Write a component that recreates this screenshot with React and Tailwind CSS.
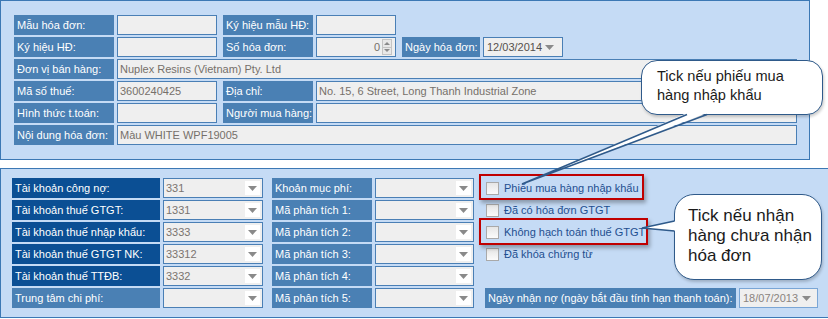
import React from 'react';

const font = "font-['Liberation_Sans',Arial,sans-serif]";

function Label({ children, w, dark }) {
  return (
    <div
      className={`h-[20px] shrink-0 px-[3px] text-[11px] leading-[20px] text-white whitespace-nowrap overflow-hidden ${
        dark ? 'bg-[#0b4f94]' : 'bg-[#4a80b4]'
      } ${w}`}
    >
      {children}
    </div>
  );
}

function Input({ w, value, className = '' }) {
  return (
    <div
      className={`h-[20px] shrink-0 border border-[#4a7fb5] bg-[#efefef] px-[2px] text-[11px] leading-[18px] text-[#76706a] whitespace-nowrap overflow-hidden ${w} ${className}`}
    >
      {value}
    </div>
  );
}

function Arrow() {
  return (
    <svg width="9" height="5" viewBox="0 0 9 5">
      <path d="M0 0 L9 0 L4.5 5 Z" fill="#8a8a8a" />
    </svg>
  );
}

function Select({ w, value }) {
  return (
    <div
      className={`h-[20px] shrink-0 border border-[#4a7fb5] bg-[#efefef] flex items-center text-[11px] text-[#7a7470] ${w}`}
    >
      <span className="flex-1 pl-[2px] leading-[18px]">{value}</span>
      <span className="mr-[2px] w-[15px] h-[14px] bg-white flex items-center justify-center">
        <Arrow />
      </span>
    </div>
  );
}

function Checkbox({ label }) {
  return (
    <div className="h-[20px] flex items-center">
      <span className="ml-[1px] w-[13px] h-[13px] border border-[#a9a9a9] bg-gradient-to-b from-[#e6e6e6] to-[#fbfbfb]" />
      <span className="ml-[5px] text-[11px] text-[#1f4f90] whitespace-nowrap">{label}</span>
    </div>
  );
}

function Row({ children }) {
  return <div className="flex h-[20px] items-stretch">{children}</div>;
}

const bottomRows = [
  { l1: 'Tài khoản công nợ:', v1: '331', dark: true, l2: 'Khoản mục phí:', cb: 'Phiếu mua hàng nhập khẩu' },
  { l1: 'Tài khoản thuế GTGT:', v1: '1331', dark: true, l2: 'Mã phân tích 1:', cb: 'Đã có hóa đơn GTGT' },
  { l1: 'Tài khoản thuế nhập khẩu:', v1: '3333', dark: true, l2: 'Mã phân tích 2:', cb: 'Không hạch toán thuế GTGT' },
  { l1: 'Tài khoản thuế GTGT NK:', v1: '33312', dark: true, l2: 'Mã phân tích 3:', cb: 'Đã khóa chứng từ' },
  { l1: 'Tài khoản thuế TTĐB:', v1: '3332', dark: true, l2: 'Mã phân tích 4:' },
  { l1: 'Trung tâm chi phí:', v1: '', dark: false, l2: 'Mã phân tích 5:', last: true },
];

export default function App() {
  return (
    <div className={`relative w-[828px] h-[319px] bg-white overflow-hidden ${font}`}>
      {/* Invoice header panel */}
      <div className="w-[810px] h-[160px] border border-[#3c78b4] bg-[#c5dbf5] pt-[14px] pl-[13px] flex flex-col gap-[2px]">
        <Row>
          <Label w="w-[100px]">Mẫu hóa đơn:</Label>
          <Input w="w-[100px] ml-[3px]" />
          <Label w="w-[90px] ml-[6px]">Ký hiệu mẫu HĐ:</Label>
          <Input w="w-[80px] ml-[3px]" />
        </Row>
        <Row>
          <Label w="w-[100px]">Ký hiệu HĐ:</Label>
          <Input w="w-[100px] ml-[3px]" />
          <Label w="w-[90px] ml-[6px]">Số hóa đơn:</Label>
          <div className="ml-[3px] w-[80px] h-[20px] border border-[#4a7fb5] bg-[#efefef] flex items-center text-[11px] text-[#76706a]">
            <span className="flex-1 text-right pr-[2px]">0</span>
            <span className="mr-[3px] w-[10px] h-[16px] flex flex-col border border-[#c4c4c4] bg-[#e8e8e8]">
              <span className="flex-1 flex items-center justify-center border-b border-[#c4c4c4]">
                <svg width="6" height="3" viewBox="0 0 6 3"><path d="M0 3 L6 3 L3 0 Z" fill="#8a8a8a" /></svg>
              </span>
              <span className="flex-1 flex items-center justify-center">
                <svg width="6" height="3" viewBox="0 0 6 3"><path d="M0 0 L6 0 L3 3 Z" fill="#8a8a8a" /></svg>
              </span>
            </span>
          </div>
          <Label w="w-[78px] ml-[6px]">Ngày hóa đơn:</Label>
          <div className="ml-[3px] w-[80px] h-[20px] border border-[#4a7fb5] bg-[#efefef] flex items-center text-[11px] text-[#55504c]">
            <span className="flex-1 pl-[3px]">12/03/2014</span>
            <span className="mr-[8px]"><Arrow /></span>
          </div>
        </Row>
        <Row>
          <Label w="w-[100px]">Đơn vị bán hàng:</Label>
          <Input w="w-[680px] ml-[3px]" value="Nuplex Resins (Vietnam) Pty. Ltd" />
        </Row>
        <Row>
          <Label w="w-[100px]">Mã số thuế:</Label>
          <Input w="w-[100px] ml-[3px]" value="3600240425" />
          <Label w="w-[90px] ml-[6px]">Địa chỉ:</Label>
          <Input w="w-[481px] ml-[3px]" value="No. 15, 6 Street, Long Thanh Industrial Zone" />
        </Row>
        <Row>
          <Label w="w-[100px]">Hình thức t.toán:</Label>
          <Input w="w-[100px] ml-[3px]" />
          <Label w="w-[90px] ml-[6px]">Người mua hàng:</Label>
          <Input w="w-[481px] ml-[3px]" />
        </Row>
        <Row>
          <Label w="w-[100px]">Nội dung hóa đơn:</Label>
          <Input w="w-[680px] ml-[3px]" value="Màu WHITE WPF19005" />
        </Row>
      </div>

      {/* Accounts panel */}
      <div className="mt-[8px] w-[830px] h-[150px] border border-[#3c78b4] bg-[#c5dbf5] pt-[9px] pl-[11px] flex flex-col gap-[2px]">
        {bottomRows.map((r, i) => (
          <Row key={i}>
            <Label w="w-[148px]" dark={r.dark}>{r.l1}</Label>
            <Select w="w-[100px] ml-[3px]" value={r.v1} />
            <Label w="w-[100px] ml-[9px]">{r.l2}</Label>
            <Select w="w-[99px] ml-[3px]" value="" />
            <div className="ml-[11px] flex">
              {r.cb && <Checkbox label={r.cb} />}
              {r.last && (
                <>
                  <Label w="w-[251px]">Ngày nhận nợ (ngày bắt đầu tính hạn thanh toán):</Label>
                  <div className="ml-[3px] w-[79px] h-[20px] border border-[#7aa6d6] bg-[#efefef] flex items-center text-[11px] text-[#8a8480]">
                    <span className="flex-1 pl-[3px]">18/07/2013</span>
                    <span className="mr-[6px]"><Arrow /></span>
                  </div>
                </>
              )}
            </div>
          </Row>
        ))}
      </div>

      {/* Highlight boxes */}
      <div className="absolute left-[479px] top-[174px] w-[165px] h-[26px] border-2 border-[#c00000] shadow-[2px_3px_4px_rgba(0,0,0,0.3)]" />
      <div className="absolute left-[479px] top-[218px] w-[169px] h-[27px] border-2 border-[#c00000] shadow-[2px_3px_4px_rgba(0,0,0,0.3)]" />

      {/* Callout 1 */}
      <div className="absolute left-[641px] top-[60px] w-[182px] h-[55px] rounded-[16px] border-[1.5px] border-[#2f5a8a] bg-white pl-[15px] pt-[6px] text-[14.6px] leading-[19px] text-[#1a1a1a] shadow-[1px_2px_3px_rgba(0,0,0,0.2)]">
        Tick nếu phiếu mua<br />hàng nhập khẩu
      </div>
      {/* Callout 2 */}
      <div className="absolute left-[674px] top-[194px] w-[148px] h-[86px] rounded-[20px] border-[1.5px] border-[#2f5a8a] bg-white pl-[13px] pt-[11px] text-[17px] leading-[20px] text-[#1a1a1a] shadow-[1px_2px_3px_rgba(0,0,0,0.2)]">
        Tick nếu nhận<br />hàng chưa nhận<br />hóa đơn
      </div>

      {/* Callout tails */}
      <svg className="absolute left-0 top-0 pointer-events-none" width="828" height="319" viewBox="0 0 828 319">
        <polygon points="687,113 522,184 707,113" fill="#ffffff" />
        <polyline points="687,114.5 522,184 707,114.5" fill="none" stroke="#2f5a8a" strokeWidth="1.5" />
        <polygon points="675.5,221 642,228 675.5,231" fill="#ffffff" />
        <polyline points="674.5,221 642,228 674.5,231" fill="none" stroke="#2f5a8a" strokeWidth="1.5" />
      </svg>
    </div>
  );
}
